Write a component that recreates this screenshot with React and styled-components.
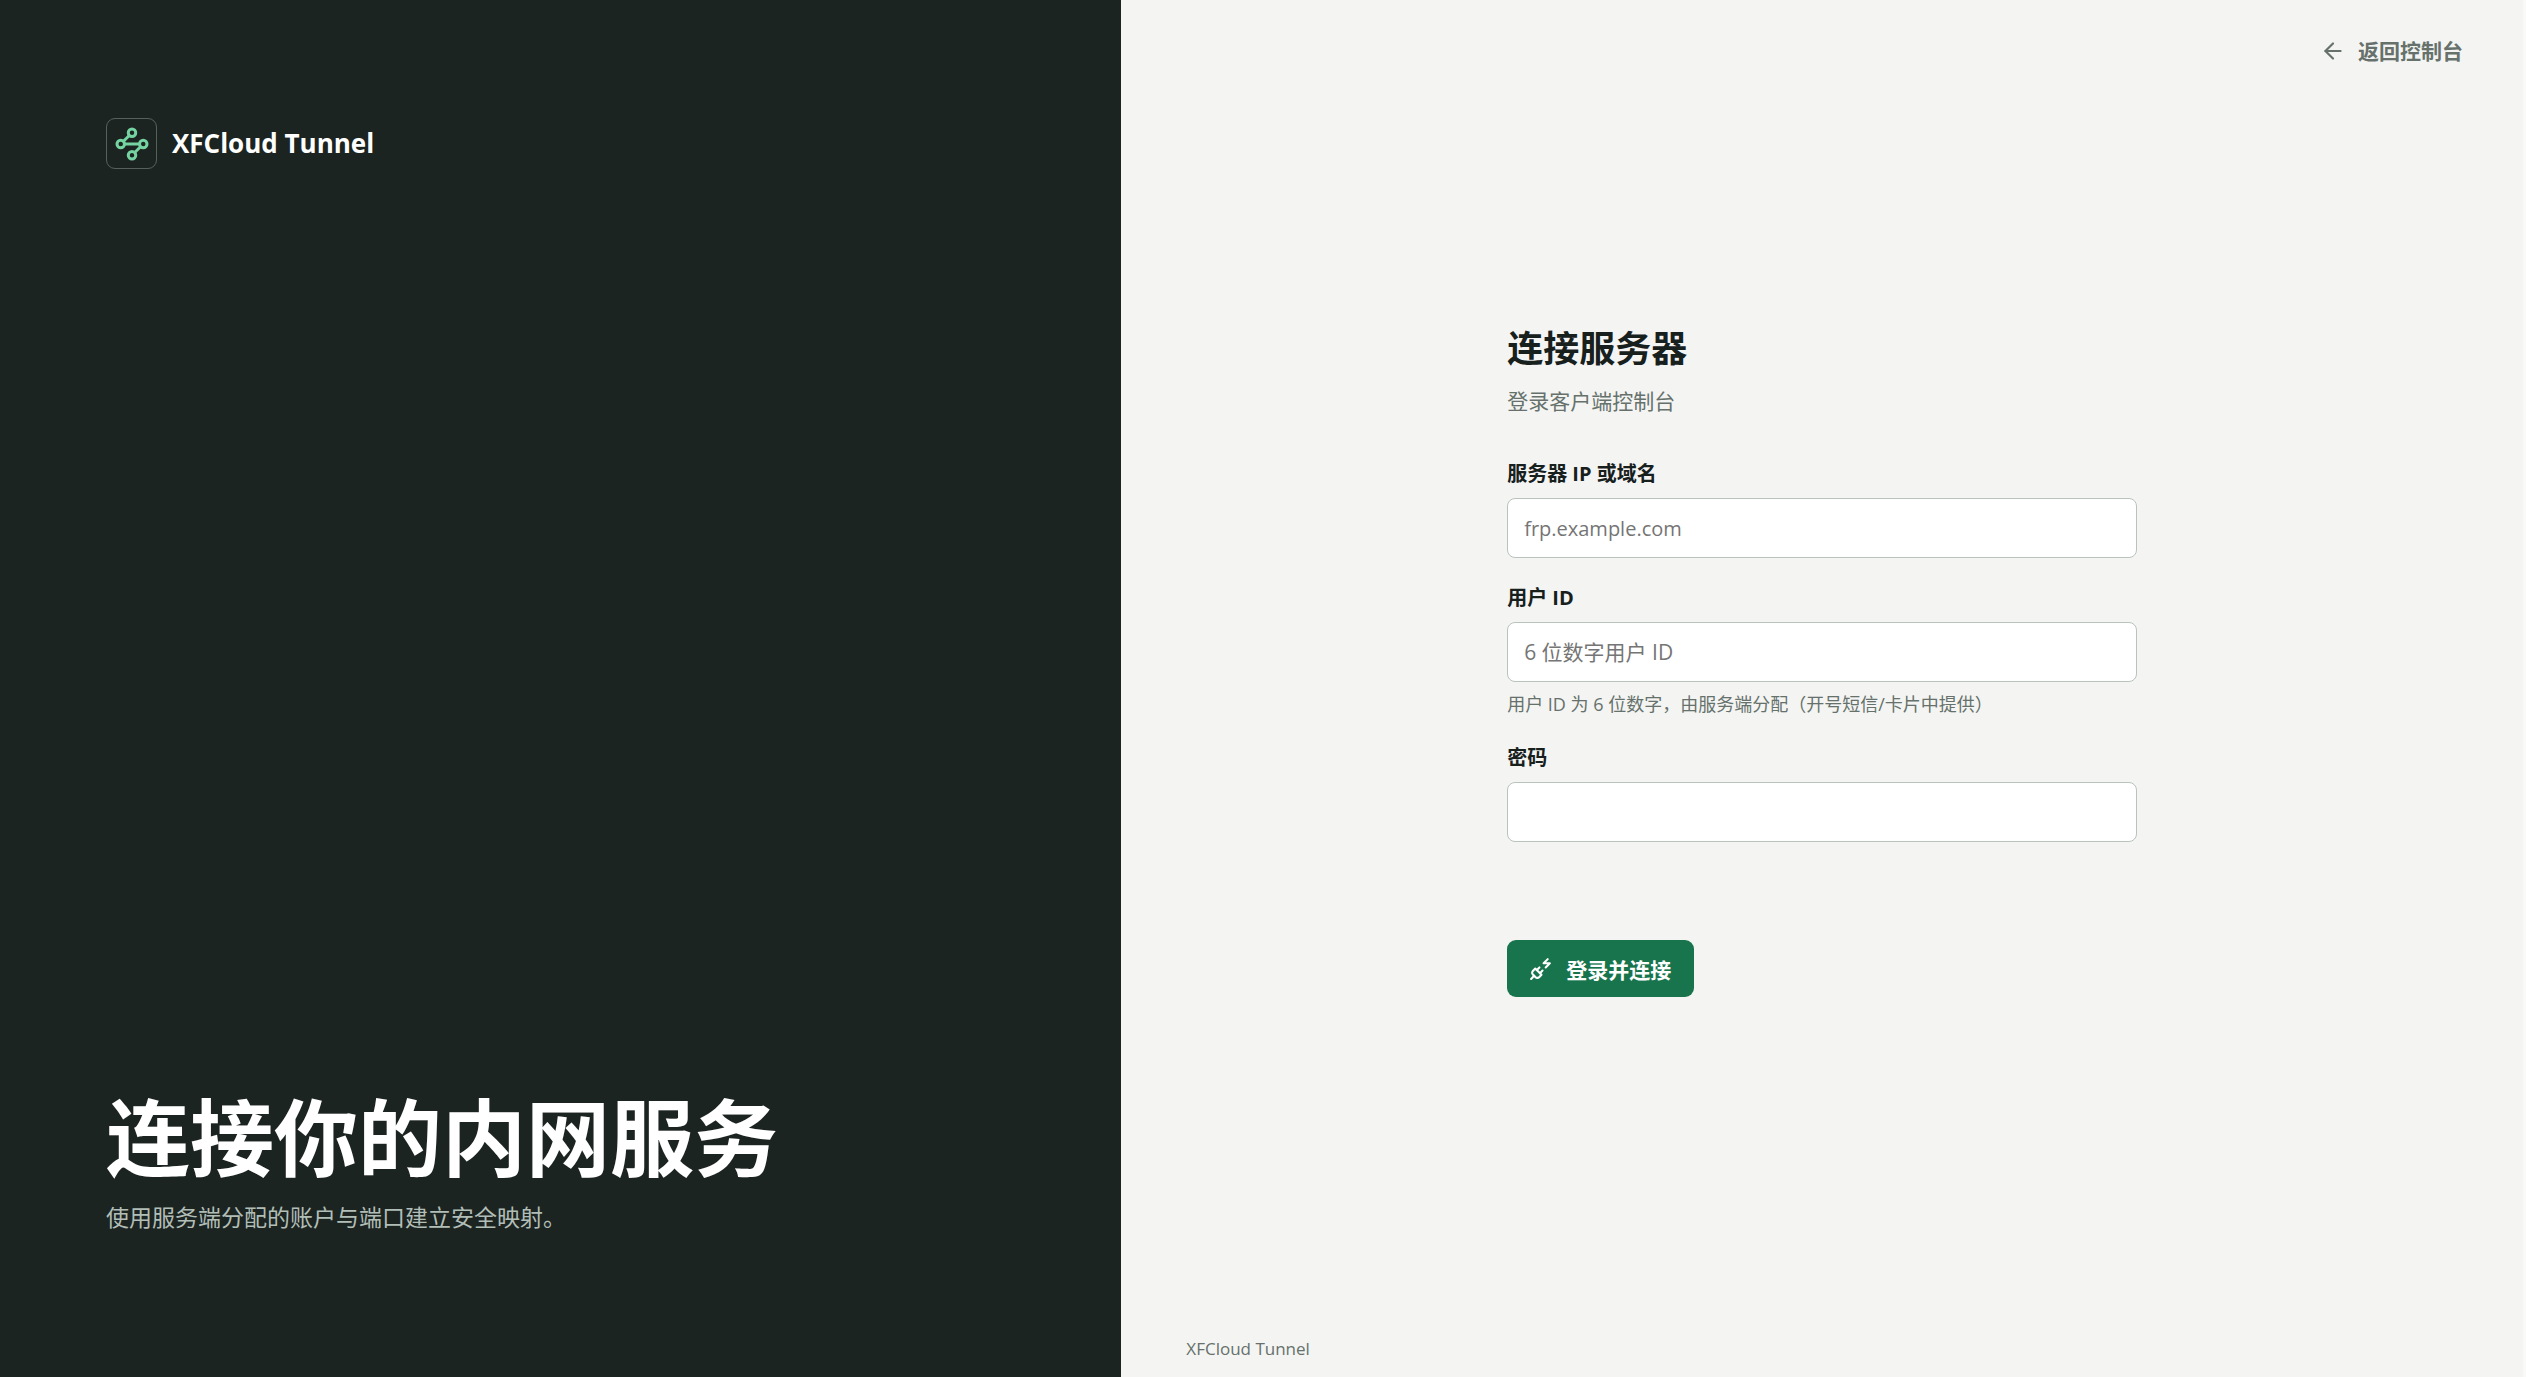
import React from "react";
import styled, { createGlobalStyle } from "styled-components";
import { ArrowLeft } from "lucide-react";

const GlobalStyle = createGlobalStyle`
  * { box-sizing: border-box; }
  body {
    margin: 0;
    background: #f4f5f3;
    color: #17201d;
    font-family: "Open Sans", "Noto Sans CJK SC", sans-serif;
  }
  h1, h2, p { margin: 0; }
`;

const Page = styled.div`
  display: grid;
  grid-template-columns: 4fr 5fr;
  min-height: 100vh;
  border-right: 3px solid #f9faf8;
`;

const Aside = styled.aside`
  display: flex;
  flex-direction: column;
  justify-content: space-between;
  padding: 118px 106px 143px;
  background: #1c2421;
  color: #ffffff;
`;

const Brand = styled.div`
  display: flex;
  align-items: center;
  gap: 15px;
  font-size: 26px;
  line-height: 51px;
  font-weight: 700;
`;

const BrandMark = styled.span`
  display: grid;
  place-items: center;
  width: 51px;
  height: 51px;
  border: 1px solid #56615c;
  border-radius: 9px;
  color: #74d3a1;
`;

const Headline = styled.h1`
  font-size: 84px;
  line-height: 92px;
  font-weight: 700;
`;

const Lead = styled.p`
  margin-top: 16px;
  font-size: 23px;
  line-height: 34px;
  color: #b1beb7;
`;

const Main = styled.main`
  display: flex;
  flex-direction: column;
  padding: 35px 60px 15px;
`;

const BackLink = styled.a`
  display: flex;
  align-items: center;
  align-self: flex-end;
  gap: 12px;
  font-size: 21px;
  line-height: 32px;
  font-weight: 700;
  color: #66716c;
  text-decoration: none;
`;

const Form = styled.form`
  flex: 1;
  display: flex;
  flex-direction: column;
  align-self: center;
  width: 100%;
  max-width: 630px;
  padding-top: 252px;
`;

const Title = styled.h2`
  font-size: 36px;
  line-height: 60px;
  font-weight: 700;
`;

const Subtitle = styled.p`
  margin: 6px 0 42px;
  font-size: 21px;
  line-height: 32px;
  color: #66716c;
`;

const Field = styled.div`
  display: flex;
  flex-direction: column;
  margin-bottom: 25px;
`;

const Label = styled.label`
  margin-bottom: 9px;
  font-size: 20px;
  line-height: 30px;
  font-weight: 700;
`;

const TextInput = styled.input`
  width: 100%;
  height: 60px;
  padding: 0 16px;
  border: 1px solid #b9c3be;
  border-radius: 8px;
  background: #ffffff;
  color: #17201d;
  font: inherit;
  font-size: ${({ $latin }) => ($latin ? "20px" : "21px")};

  &::placeholder { color: #757575; opacity: 1; }
`;

const Hint = styled.p`
  margin-top: 9px;
  font-size: 18px;
  line-height: 27px;
  color: #66716c;
`;

const SubmitButton = styled.button`
  display: flex;
  align-items: center;
  align-self: flex-start;
  gap: 12px;
  height: 57px;
  margin-top: 73px;
  padding: 0 23px 0 22px;
  border: 0;
  border-radius: 9px;
  background: #18744c;
  color: #ffffff;
  font: inherit;
  font-size: 21px;
  font-weight: 700;
`;

const Footer = styled.footer`
  padding-left: 5px;
  font-size: 17px;
  line-height: 27px;
  color: #66716c;
`;

const NetworkIcon = () => (
  <svg width="36" height="36" viewBox="0 0 24 24" fill="none" stroke="currentColor" strokeWidth="2" strokeLinecap="round" strokeLinejoin="round" aria-hidden="true">
    <circle cx="12" cy="4.5" r="2.5" />
    <path d="m10.2 6.3-3.9 3.9" />
    <circle cx="4.5" cy="12" r="2.5" />
    <path d="M7 12h10" />
    <circle cx="19.5" cy="12" r="2.5" />
    <path d="m13.8 17.7 3.9-3.9" />
    <circle cx="12" cy="19.5" r="2.5" />
  </svg>
);

const PlugZapIcon = () => (
  <svg width="25" height="25" viewBox="0 0 24 24" fill="none" stroke="currentColor" strokeWidth="2" strokeLinecap="round" strokeLinejoin="round" aria-hidden="true">
    <path d="M6.3 20.3a2.4 2.4 0 0 0 3.4 0L12 18l-6-6-2.3 2.3a2.4 2.4 0 0 0 0 3.4Z" />
    <path d="m2 22 3-3" />
    <path d="M7.5 13.5 10 11" />
    <path d="M10.5 16.5 13 14" />
    <path d="m18 3-4 4h6l-4 4" />
  </svg>
);

export default function App() {
  return (
    <>
      <GlobalStyle />
      <Page lang="zh-CN">
        <Aside>
          <Brand>
            <BrandMark><NetworkIcon /></BrandMark>
            <span>XFCloud Tunnel</span>
          </Brand>
          <div>
            <Headline>连接你的内网服务</Headline>
            <Lead>使用服务端分配的账户与端口建立安全映射。</Lead>
          </div>
        </Aside>
        <Main>
          <BackLink href="#console">
            <ArrowLeft size={26} aria-hidden="true" />
            返回控制台
          </BackLink>
          <Form onSubmit={(event) => event.preventDefault()}>
            <Title>连接服务器</Title>
            <Subtitle>登录客户端控制台</Subtitle>
            <Field>
              <Label htmlFor="server">服务器 IP 或域名</Label>
              <TextInput id="server" type="text" placeholder="frp.example.com" $latin />
            </Field>
            <Field>
              <Label htmlFor="user-id">用户 ID</Label>
              <TextInput id="user-id" type="text" inputMode="numeric" placeholder="6 位数字用户 ID" aria-describedby="user-id-hint" />
              <Hint id="user-id-hint">用户 ID 为 6 位数字，由服务端分配（开号短信/卡片中提供）</Hint>
            </Field>
            <Field>
              <Label htmlFor="password">密码</Label>
              <TextInput id="password" type="password" />
            </Field>
            <SubmitButton type="submit">
              <PlugZapIcon />
              登录并连接
            </SubmitButton>
          </Form>
          <Footer>XFCloud Tunnel</Footer>
        </Main>
      </Page>
    </>
  );
}
